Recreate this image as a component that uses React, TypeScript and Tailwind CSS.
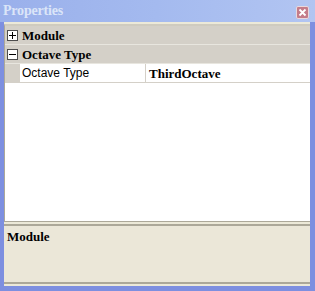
import React from 'react';

const serif = { fontFamily: '"Liberation Serif", "DejaVu Serif", serif' };

const Box: React.FC<{ open: boolean }> = ({ open }) => (
  <div className="w-[11px] h-[11px] border border-[#4d4d4d] bg-white relative">
    <div className="absolute left-[1px] top-[4px] w-[7px] h-px bg-black" />
    {!open && <div className="absolute left-[4px] top-[1px] w-px h-[7px] bg-black" />}
  </div>
);

const Category: React.FC<{ label: string; open: boolean }> = ({ label, open }) => (
  <div className="h-[19px] flex items-center gap-[4px] pl-[2px] bg-[#d4d0c8] border-b border-[#e8e6df]">
    <Box open={open} />
    <span className="text-[13px] font-bold text-black leading-none" style={serif}>
      {label}
    </span>
  </div>
);

const App: React.FC = () => {
  return (
    <div className="w-[315px] h-[291px] flex flex-col bg-[#7d8fe0] overflow-hidden">
      {/* title bar */}
      <div className="h-[22px] flex items-center justify-between bg-gradient-to-r from-[#9ab0eb] via-[#a4baef] to-[#b2c5f2] pl-[3px] pr-[6px]">
        <span className="text-[14px] font-bold text-[#dbe5f8] leading-none tracking-[-0.2px]" style={serif}>
          Properties
        </span>
        <div className="w-[13px] h-[13px] mt-[2px] rounded-[2px] border border-[#e9d8dc] bg-[#c47c8a] flex items-center justify-center">
          <svg width="9" height="9" viewBox="0 0 9 9">
            <path d="M1.5 1.5 L7.5 7.5 M7.5 1.5 L1.5 7.5" stroke="#fff" strokeWidth="1.8" />
          </svg>
        </div>
      </div>

      {/* body */}
      <div className="flex-1 flex flex-col bg-[#ece9d8] ml-[4px] mr-[5px] mb-[5px] pt-[2px]">
        <div className="h-[197px] flex flex-col bg-white border-t-2 border-l border-[#aca899] border-t-[#cfcbbf]">
          <Category label="Module" open={false} />
          <Category label="Octave Type" open={true} />
          <div className="h-[19px] flex border-b border-[#d4d0c8]">
            <div className="w-[15px] bg-[#d4d0c8]" />
            <div className="w-[126px] flex items-center pl-[2px] border-r border-[#d4d0c8]">
              <span className="text-[12px] text-black leading-none" style={{ fontFamily: '"Liberation Sans", Arial, sans-serif' }}>
                Octave Type
              </span>
            </div>
            <div className="flex-1 flex items-center pl-[3px]">
              <span className="text-[13px] font-bold text-black leading-none" style={serif}>
                ThirdOctave
              </span>
            </div>
          </div>
        </div>
        <div className="h-[1px] bg-[#aca899]" />
        <div className="h-[2px]" />
        <div className="flex-1 border-y-2 border-[#aca899] bg-[#ebe7d8] px-[3px] pt-[4px] mb-[2px]">
          <div className="text-[13px] font-bold text-black leading-[14px]" style={serif}>
            Module
          </div>
        </div>
      </div>
    </div>
  );
};

export default App;
